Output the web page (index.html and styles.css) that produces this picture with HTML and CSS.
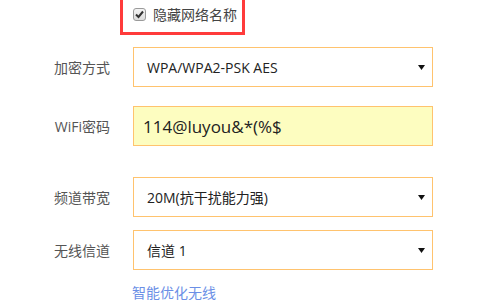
FILE: index.html
```html
<!DOCTYPE html>
<html lang="zh-CN">
<head>
<meta charset="utf-8">
<link rel="stylesheet" href="styles.css">
</head>
<body>
<div class="hide-ssid">
  <span class="check"><svg width="9" height="9" viewBox="0 0 9 9"><path d="M1 4.5 L3.5 7 L8 1.5" fill="none" stroke="#333" stroke-width="2"/></svg></span>
  <span class="check-label">隐藏网络名称</span>
</div>
<div class="form">
  <div class="row r1">
    <label class="lbl">加密方式</label>
    <div class="field select"><span class="val">WPA/WPA2-PSK AES</span><svg class="arrow" width="7" height="5" viewBox="0 0 7 5"><path d="M0 0 H7 L3.5 5 Z" fill="#111"/></svg></div>
  </div>
  <div class="row r2">
    <label class="lbl">WiFi密码</label>
    <div class="field input"><span class="pwd">114@luyou&amp;*(%$</span></div>
  </div>
  <div class="row r3">
    <label class="lbl">频道带宽</label>
    <div class="field select"><span class="val">20M(抗干扰能力强)</span><svg class="arrow" width="7" height="5" viewBox="0 0 7 5"><path d="M0 0 H7 L3.5 5 Z" fill="#111"/></svg></div>
  </div>
  <div class="row r4">
    <label class="lbl">无线信道</label>
    <div class="field select"><span class="val">信道 1</span><svg class="arrow" width="7" height="5" viewBox="0 0 7 5"><path d="M0 0 H7 L3.5 5 Z" fill="#111"/></svg></div>
  </div>
  <div class="link-row"><a class="link">智能优化无线</a></div>
</div>
</body>
</html>
```
FILE: styles.css
```css
html, body {
  margin: 0;
  padding: 0;
  background: #fff;
  font-family: "Open Sans", "Noto Sans CJK SC", sans-serif;
}
body {
  width: 480px;
  height: 300px;
  overflow: hidden;
}
.hide-ssid {
  margin-left: 120px;
  width: 125px;
  height: 35px;
  box-sizing: border-box;
  border: 3px solid #ff3b3b;
  border-top: 0;
  display: flex;
  align-items: center;
  padding-left: 10px;
  padding-bottom: 4px;
}
.check {
  width: 13px;
  height: 13px;
  box-sizing: border-box;
  border: 1px solid #9a9a9a;
  border-radius: 3px;
  background: linear-gradient(#f4f4f4, #dcdcdc);
  display: flex;
  align-items: center;
  justify-content: center;
}
.check-label {
  margin-left: 7px;
  font-size: 14px;
  color: #444;
}
.form {
  margin-top: 12px;
}
.row {
  display: flex;
  align-items: center;
}
.r2 { margin-top: 19px; }
.r3 { margin-top: 31px; }
.r4 { margin-top: 13px; }
.lbl {
  width: 110px;
  padding-right: 23px;
  box-sizing: content-box;
  text-align: right;
  font-size: 14px;
  color: #555;
}
.field {
  width: 300px;
  height: 40px;
  box-sizing: border-box;
  border: 1px solid #ffc36e;
  display: flex;
  align-items: center;
}
.select {
  padding: 0 7px 0 13px;
  justify-content: space-between;
  background: #fff;
}
.val {
  font-size: 14px;
  color: #222;
}
.input {
  background: #fdfdc0;
  padding-left: 9px;
}
.pwd {
  font-size: 17px;
  color: #222;
}
.link-row {
  margin-top: 12px;
  padding-left: 132px;
  line-height: 20px;
}
.link {
  font-size: 14px;
  color: #6b8fe6;
}
```
